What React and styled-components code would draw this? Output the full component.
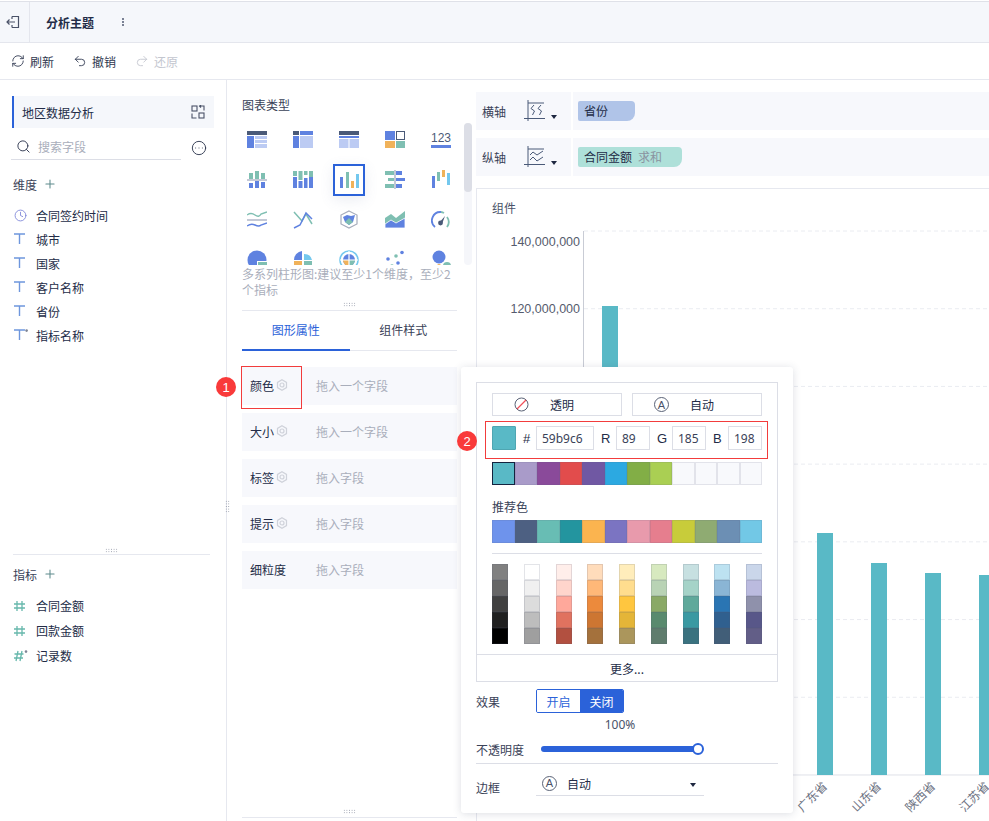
import React from 'react';
import styled, { createGlobalStyle } from 'styled-components';
import { RefreshCw, Undo2, Redo2, Search, CircleEllipsis, Clock, Plus } from 'lucide-react';

const BLUE = '#2b62d9';
const TEXT = '#232c47';
const MUTED = '#a9aebb';
const LINE = '#e6e8ef';
const PANEL = '#f7f8fc';

const Global = createGlobalStyle`
	* { box-sizing: border-box; }
	html, body { margin: 0; padding: 0; background: #fff; }
	body {
		font-family: "Noto Sans CJK SC", "Noto Sans", sans-serif;
		font-size: 12px;
		color: ${TEXT};
	}
`;

const Page = styled.div`
	position: relative;
	width: 989px;
	height: 821px;
	overflow: hidden;
	background: #fff;
`;

const Header = styled.header`
	margin-top: 1px;
	height: 42px;
	display: flex;
	align-items: center;
	background: #f5f7fb;
	border-top: 1px solid #dfe1e8;
	border-bottom: 1px solid #e4e6ed;
`;

const BackCell = styled.div`
	width: 30px;
	height: 100%;
	display: flex;
	align-items: center;
	justify-content: center;
	padding-right: 4px;
	border-right: 1px solid #e4e6ed;
`;

const HeaderTitle = styled.div`
	margin-left: 16px;
	font-weight: 700;
	width: 76px;
`;

const Dots = styled.div`
	width: 2px;
	height: 2px;
	background: #7a8194;
	box-shadow: 0 -3px 0 #7a8194, 0 3px 0 #7a8194;
`;

const Toolbar = styled.div`
	height: 37px;
	display: flex;
	align-items: center;
	gap: 19px;
	padding-left: 11px;
	border-bottom: 1px solid ${LINE};
`;

const ToolButton = styled.div`
	display: flex;
	align-items: center;
	gap: 5px;
	color: ${p => (p.$disabled ? '#c3c6cf' : '#2f3850')};
`;

const Body = styled.div`
	height: 741px;
	display: flex;
`;

const LeftPanel = styled.aside`
	position: relative;
	width: 227px;
	flex: none;
	border-right: 1px solid ${LINE};
`;

const LeftTop = styled.div`
	height: 466px;
	padding: 16px 12px 0 12px;
`;

const SourceBar = styled.div`
	height: 32px;
	width: 202px;
	display: flex;
	align-items: center;
	justify-content: space-between;
	padding: 0 9px 0 8px;
	background: #f5f7fb;
	border-left: 2px solid ${BLUE};
`;

const SearchRow = styled.div`
	margin-top: 8px;
	display: flex;
	align-items: center;
	justify-content: space-between;
	width: 195px;
`;

const SearchBox = styled.div`
	margin-left: -1px;
	width: 170px;
	height: 24px;
	display: flex;
	align-items: center;
	gap: 7px;
	padding: 0 0 2px 5px;
	border-bottom: 1px solid #dcdee6;
	color: ${MUTED};
`;

const GroupHead = styled.div`
	display: flex;
	align-items: center;
	gap: 6px;
	height: 20px;
	padding-left: 1px;
	margin-top: ${p => p.$top}px;
	color: #3a4258;
`;

const FieldList = styled.div`
	margin-top: 9px;
`;

const Field = styled.div`
	height: ${p => p.$pitch}px;
	display: flex;
	align-items: center;
	gap: 8px;
`;

const FieldIcon = styled.span`
	width: 16px;
	display: flex;
	justify-content: center;
`;

const HGrip = styled.div`
	width: 13px;
	height: 5px;
	margin: 0 auto;
	background-image: radial-gradient(#8b90a0 0.7px, transparent 0.8px);
	background-size: 2.6px 2.5px;
`;

const GripZone = styled.div`
	height: 8px;
	margin-top: ${p => p.$top || 0}px;
	display: flex;
	align-items: center;
	justify-content: center;
`;

const LeftBottom = styled.div`
	padding: 0 16px 0 12px;
`;

const RuleBelow = styled.div`
	border-bottom: 1px solid ${LINE};
	margin-left: ${p => p.$inset || 0}px;
	padding-bottom: ${p => p.$gap || 0}px;
`;

const VGrip = styled.div`
	position: absolute;
	right: -4px;
	top: 420px;
	width: 5px;
	height: 13px;
	background-image: radial-gradient(#8b90a0 0.7px, transparent 0.8px);
	background-size: 2.5px 2.6px;
`;

const MidPanel = styled.section`
	width: 249px;
	flex: none;
	display: flex;
	flex-direction: column;
	padding: 15px 19px 3px 15px;
`;

const MidTitle = styled.div`
	height: 20px;
	line-height: 20px;
	color: #3a4258;
`;

const ChartPicker = styled.div`
	margin: 5px -19px 0 -8px;
	height: 145px;
	display: flex;
`;

const ChartGrid = styled.div`
	width: 230px;
	height: 145px;
	overflow: hidden;
	display: grid;
	grid-template-columns: repeat(5, 46px);
	grid-auto-rows: 40px;
`;

const ChartCell = styled.div`
	display: flex;
	align-items: center;
	justify-content: center;
`;

const SelectedBox = styled.div`
	width: 32px;
	height: 32px;
	display: flex;
	align-items: center;
	justify-content: center;
	border: 2px solid ${BLUE};
	box-shadow: 0 4px 14px rgba(90, 110, 160, 0.12);
`;

const ScrollTrack = styled.div`
	margin-top: 3px;
	width: 8px;
	height: 142px;
	border-radius: 4px;
	background: #f5f6fa;
`;

const ScrollThumb = styled.div`
	width: 8px;
	height: 69px;
	border-radius: 4px;
	background: #dcdee6;
`;

const Hint = styled.div`
	margin-top: 1px;
	width: 218px;
	line-height: 16px;
	color: ${MUTED};
`;

const Tabs = styled.div`
	display: flex;
	height: 41px;
	border-top: 1px solid ${LINE};
	border-bottom: 1px solid ${LINE};
	margin-top: 2px;
`;

const Tab = styled.div`
	width: 108px;
	height: 40px;
	display: flex;
	align-items: center;
	justify-content: center;
	padding-bottom: 2px;
	color: ${p => (p.$active ? BLUE : '#3a4258')};
	border-bottom: 2px solid ${p => (p.$active ? BLUE : 'transparent')};
`;

const DropList = styled.div`
	margin-top: 16px;
	display: flex;
	flex-direction: column;
	gap: 8px;
`;

const DropRow = styled.div`
	height: 38px;
	display: flex;
	align-items: center;
	padding: 0 0 2px 8px;
	background: ${PANEL};
`;

const DropLabel = styled.div`
	width: 66px;
	display: flex;
	align-items: center;
	gap: 2px;
`;

const Placeholder = styled.span`
	color: ${MUTED};
`;

const MidFoot = styled.div`
	margin-top: auto;
`;

const RightPanel = styled.section`
	flex: 1;
	min-width: 0;
	padding-top: 12px;
`;

const AxisRow = styled.div`
	height: 38px;
	margin-bottom: 8px;
	display: flex;
	gap: 2px;
`;

const AxisLabel = styled.div`
	width: 95px;
	display: flex;
	align-items: center;
	padding-left: 6px;
	background: ${PANEL};
	span { width: 42px; color: #3a4258; }
`;

const AxisValue = styled.div`
	flex: 1;
	display: flex;
	align-items: center;
	padding-left: 5px;
	background: ${PANEL};
`;

const Pill = styled.div`
	height: 20px;
	width: ${p => p.$width}px;
	display: flex;
	align-items: center;
	gap: 6px;
	padding: 0 0 2px 6px;
	background: ${p => p.$color};
	border-radius: 2px 4px 8px 2px;
	em { font-style: normal; color: #8a93a0; }
`;

const Caret = styled.i`
	display: inline-block;
	width: 0;
	height: 0;
	margin: ${p => p.$margin};
	border-left: 3.5px solid transparent;
	border-right: 3.5px solid transparent;
	border-top: 4px solid #1e2740;
`;

const ChartCard = styled.div`
	margin-top: 12px;
	height: 640px;
	border-top: 1px solid ${LINE};
	border-left: 1px solid ${LINE};
	padding-top: 9px;
`;

const ChartTitle = styled.div`
	height: 20px;
	line-height: 20px;
	padding-left: 15px;
	color: #4a5268;
`;

const ChartSvg = styled.svg`
	display: block;
	margin-top: 4px;
	text {
		font-family: "Noto Sans CJK SC", sans-serif;
		font-size: 12px;
		fill: #6d7282;
	}
	text.num {
		font-family: "Liberation Sans", sans-serif;
		font-size: 12.5px;
		fill: #555b6d;
	}
`;

const Popover = styled.div`
	position: absolute;
	left: 461px;
	top: 367px;
	width: 332px;
	height: 446px;
	padding: 15px 15px 0;
	background: #fff;
	border-radius: 3px;
	box-shadow: 0 1px 8px rgba(60, 70, 100, 0.18);
`;

const PickerBox = styled.div`
	width: 302px;
	height: 300px;
	border: 1px solid #dcdee6;
	padding: 10px 15px 0;
`;

const ModeRow = styled.div`
	display: flex;
	gap: 10px;
`;

const ModeButton = styled.div`
	width: 130px;
	height: 23px;
	display: flex;
	align-items: center;
	padding-left: 21px;
	border: 1px solid #dcdee6;
	span { margin-left: 21px; }
`;

const LetterBadge = styled.div`
	width: 15px;
	height: 15px;
	flex: none;
	display: flex;
	align-items: center;
	justify-content: center;
	border: 1px solid #5a6276;
	border-radius: 50%;
	font-family: "Liberation Sans", sans-serif;
	font-size: 11px;
	color: #4a5268;
`;

const ValueRow = styled.div`
	margin-top: 10px;
	height: 24px;
	display: flex;
	align-items: center;
`;

const ValueSwatch = styled.div`
	width: 24px;
	height: 24px;
	margin-right: 7px;
	background: #59b9c6;
	border: 1px solid #4fa6b2;
	border-radius: 1px;
`;

const ValueKey = styled.span`
	width: ${p => p.$width}px;
	font-family: "Liberation Sans", sans-serif;
	font-size: 13px;
`;

const ValueInput = styled.div`
	width: ${p => p.$width}px;
	height: 24px;
	margin-right: ${p => p.$gap || 0}px;
	display: flex;
	align-items: center;
	padding-left: 5px;
	border: 1px solid #dcdee6;
	font-family: "Noto Sans", sans-serif;
	font-size: 12px;
	color: #3a4258;
`;

const SwatchRow = styled.div`
	margin-top: ${p => p.$top}px;
	display: grid;
	grid-template-columns: repeat(12, 1fr);
	height: 23px;
`;

const Swatch = styled.div`
	background: ${p => p.$color};
	border: 1px solid ${p => (p.$selected ? '#14233f' : 'rgba(90, 100, 130, 0.14)')};
`;

const SectionLabel = styled.div`
	margin-top: 12px;
	height: 20px;
	line-height: 20px;
	color: #3a4258;
`;

const ThinRule = styled.div`
	margin-top: 10px;
	height: 1px;
	background: #dcdee6;
`;

const ShadeGrid = styled.div`
	margin-top: 10px;
	display: flex;
	justify-content: space-between;
`;

const ShadeColumn = styled.div`
	width: 16px;
	display: flex;
	flex-direction: column;
`;

const Shade = styled.div`
	height: 16px;
	background: ${p => p.$color};
	border: 1px solid rgba(80, 90, 110, 0.16);
`;

const MoreRow = styled.div`
	margin: 10px -15px 0;
	height: 27px;
	display: flex;
	align-items: center;
	justify-content: center;
	border-top: 1px solid #dcdee6;
`;

const OptionRow = styled.div`
	display: flex;
	align-items: center;
	height: 24px;
	margin-top: ${p => p.$top}px;
`;

const OptionKey = styled.div`
	width: 60px;
	color: #3a4258;
`;

const Toggle = styled.div`
	width: 88px;
	height: 24px;
	display: flex;
	border: 1px solid ${BLUE};
	border-radius: 2px;
	overflow: hidden;
`;

const ToggleItem = styled.div`
	flex: 1;
	display: flex;
	align-items: center;
	justify-content: center;
	color: ${p => (p.$on ? '#fff' : BLUE)};
	background: ${p => (p.$on ? BLUE : '#fff')};
`;

const Percent = styled.div`
	margin-top: 4px;
	width: 288px;
	text-align: center;
	line-height: 16px;
	font-family: "Noto Sans", sans-serif;
	color: #4a5268;
`;

const SliderTrack = styled.div`
	position: relative;
	margin-left: 5px;
	width: 157px;
	height: 6px;
	border-radius: 3px;
	background: ${BLUE};
`;

const SliderKnob = styled.div`
	position: absolute;
	right: -6px;
	top: -3px;
	width: 12px;
	height: 12px;
	border-radius: 50%;
	background: #fff;
	border: 2px solid ${BLUE};
`;

const OptionRule = styled.div`
	margin-top: 2px;
	height: 1px;
	width: 302px;
	background: #dcdee6;
`;

const SelectBox = styled.div`
	width: 168px;
	height: 24px;
	align-self: flex-start;
	margin-top: -3px;
	display: flex;
	align-items: center;
	gap: 10px;
	padding: 0 8px 1px 6px;
	border-bottom: 1px solid #dcdee6;
`;

const RedFrame = styled.div`
	position: absolute;
	left: ${p => p.$x}px;
	top: ${p => p.$y}px;
	width: ${p => p.$w}px;
	height: ${p => p.$h}px;
	border: 1px solid #f23c3c;
`;

const Marker = styled.div`
	position: absolute;
	left: ${p => p.$x}px;
	top: ${p => p.$y}px;
	width: 20px;
	height: 20px;
	display: flex;
	align-items: center;
	justify-content: center;
	border-radius: 50%;
	background: #f93a3a;
	color: #fff;
	font-family: "Liberation Sans", sans-serif;
	font-size: 13px;
`;

const B = '#5f82e0';
const L = '#bccbf3';
const D = '#4a5a78';
const T = '#7fbfb2';
const O = '#f0b25a';
const S = '#74c8ee';
const G = '#c4c9d6';

const boxes = list =>
	list.map(([x, y, w, h, fill], i) => <rect key={i} x={x} y={y} width={w} height={h} fill={fill} />);

const Glyph = ({ children }) =>
	<svg width="20" height="20" viewBox="0 0 20 20">
		{children}
	</svg>;

const chartIcons = [
	boxes([[0, 1, 20, 4, D], [0, 6, 7, 12, B], [8, 6, 12, 3, L], [8, 10, 12, 3, L], [8, 14, 12, 4, L]]),
	boxes([[0, 1, 6, 4, D], [7, 1, 13, 4, B], [0, 6, 6, 12, B], [7, 6, 13, 12, L]]),
	boxes([[0, 1, 20, 4, D], [0, 6, 20, 2, B], [0, 9, 9.5, 9, L], [10.5, 9, 9.5, 9, L]]),
	<>
		{boxes([[0, 1, 10, 9, B], [0, 11, 10, 7, O], [11, 11, 9, 7, T]])}
		<rect x="11.5" y="1.5" width="8" height="8" fill="#fff" stroke={D} />
	</>,
	<>
		<text x="10" y="12" textAnchor="middle" fontFamily="Liberation Sans" fontSize="12" fill={D}>123</text>
		<rect x="0" y="15" width="20" height="3" fill={B} />
	</>,
	boxes([[2, 3, 4, 6, T], [8, 1, 4, 8, T], [14, 3, 4, 6, T], [0, 9, 20, 2, G], [2, 13, 4, 5, B], [8, 11, 4, 7, B], [14, 12, 4, 6, B]]),
	boxes([[0, 1, 4, 5, T], [0, 7, 4, 11, B], [5.5, 1, 4, 9, T], [5.5, 11, 4, 7, B], [11, 1, 3.5, 4, T], [11, 8, 3.5, 10, B], [16, 1, 4, 6, T], [16, 7, 4, 11, B]]),
	boxes([[1, 7, 3, 11, B], [7, 2, 3, 16, T], [12, 11, 3, 7, O], [17, 4, 3, 14, S]]),
	boxes([[0, 1, 10, 4, T], [3, 8, 7, 3, T], [0, 14, 10, 4, T], [9, 0, 2, 19, G], [11, 1, 6, 4, B], [11, 8, 9, 3, B], [11, 14, 6, 4, B]]),
	boxes([[1, 6, 3, 12, B], [6, 2, 3, 9, T], [11, 0, 3, 7, O], [16, 3, 3, 12, S]]),
	<>
		<path d="M0 5 Q4 2 8 5 T14 4 L20 2" fill="none" stroke={T} strokeWidth="1.4" />
		<rect x="0" y="9" width="20" height="2" fill={G} />
		<path d="M0 16 Q4 13 8 15 T14 15 L20 13" fill="none" stroke={B} strokeWidth="1.4" />
	</>,
	<>
		<path d="M1 2 L9 11 L13 4 L19 14" fill="none" stroke={T} strokeWidth="1.5" />
		<path d="M1 18 L7 15 L13 3 L19 9" fill="none" stroke={B} strokeWidth="1.5" />
	</>,
	<>
		<path d="M10 1 L18 5 V14 L10 18 L2 14 V5 Z" fill="none" stroke="#a6acbb" strokeWidth="1.2" />
		<path d="M4 7 L8 5 L12 6 L16 5 L14 12 L10 15 L6 12 Z" fill={B} />
		<path d="M6 12 L10 8 L14 12 L10 15 Z" fill={T} />
	</>,
	<>
		<path d="M0 8 L6 4 L11 8 L20 1 V18 H0 Z" fill={T} />
		<path d="M0 14 L6 10 L11 13 L20 8 V18 H0 Z" fill={B} stroke="#fff" strokeWidth="0.8" />
	</>,
	<>
		<path d="M4 17 A8.5 8.5 0 0 1 10 2" fill="none" stroke={B} strokeWidth="1.8" />
		<path d="M10 2 A8.5 8.5 0 0 1 13 3" fill="none" stroke={T} strokeWidth="1.8" />
		<path d="M16 7 A8.5 8.5 0 0 1 16 17" fill="none" stroke={T} strokeWidth="1.8" />
		<path d="M8 13 L14 6 L11 14 Z" fill={D} />
		<circle cx="9.5" cy="13" r="2.4" fill={D} />
	</>,
	<>
		<circle cx="10" cy="10" r="9.5" fill={B} />
		<rect x="10" y="11" width="10" height="9" fill="#fff" />
		<rect x="11" y="12" width="9" height="6" fill={T} />
	</>,
	<>
		<path d="M9 1 A9 9 0 0 0 1 10 H9 Z" fill={B} />
		<path d="M11 4 A8 8 0 0 1 19 10 H11 Z" fill={S} />
		<rect x="1" y="11" width="8" height="7" fill={O} />
		<rect x="11" y="11" width="8" height="7" fill={T} />
	</>,
	<>
		<circle cx="10" cy="10" r="9" fill="none" stroke={S} strokeWidth="1.6" />
		<circle cx="10" cy="10" r="6" fill={B} />
		<path d="M4 10 A6 6 0 0 0 10 16 V10 Z" fill={O} />
		<path d="M16 10 A6 6 0 0 1 10 16 V10 Z" fill={T} />
		<path d="M10 1 V19 M1 10 H19" stroke="#fff" strokeWidth="1.2" />
	</>,
	<>
		<circle cx="3" cy="9" r="1.8" fill={B} />
		<circle cx="11" cy="6" r="1.8" fill={T} />
		<circle cx="17" cy="2.5" r="1.8" fill={B} />
		<circle cx="7" cy="16" r="1.8" fill={T} />
		<circle cx="13" cy="13" r="1.8" fill={B} />
	</>,
	<>
		<circle cx="8" cy="7" r="6.5" fill={B} />
		<circle cx="16" cy="16" r="4" fill={T} />
		<circle cx="8" cy="16" r="2" fill={O} />
	</>,
];

const ExitIcon = () =>
	<svg width="14" height="14" viewBox="0 0 14 14" fill="none" stroke="#4a5268" strokeWidth="1.2">
		<path d="M6 1.5 H12.5 V12.5 H6 M6 1.5 V4 M6 12.5 V10 M9 7 H1 M3.5 4.5 L1 7 L3.5 9.5" />
	</svg>;

const SwapIcon = () =>
	<svg width="14" height="14" viewBox="0 0 14 14" fill="none" stroke="#4a5268" strokeWidth="1.1">
		<rect x="1" y="1" width="5" height="5" />
		<rect x="8" y="8" width="5" height="5" />
		<path d="M1 8.5 V13 H5.5 M8.5 1 H13 V5.5 M10 0 L8.5 1 L10 2.5 M3.5 13 L5.5 13" />
	</svg>;

const TypeIcon = ({ star }) =>
	<svg width="16" height="12" viewBox="0 0 16 12" fill="none" stroke="#6e96dd" strokeWidth="1.4">
		<path d="M2 1 H13 M7.5 1 V11" />
		{star && <circle cx="14.6" cy="1.6" r="1.3" fill="#7f8596" stroke="none" />}
	</svg>;

const HashIcon = ({ star }) =>
	<svg width="16" height="12" viewBox="0 0 16 12" fill="none" stroke="#67b8ac" strokeWidth="1.3">
		{star
			? <path d="M6 1 L4 11 M10 1 L8 11 M2.5 4 H11.5 M2 8 H11" />
			: <path d="M5 1 V11 M10 1 V11 M2 4 H13 M2 8 H13" />}
		{star && <circle cx="14" cy="1.6" r="1.3" fill="#7f8596" stroke="none" />}
	</svg>;

const GearIcon = () =>
	<svg width="12" height="12" viewBox="0 0 12 12" fill="none" stroke="#cfd2da" strokeWidth="1.2">
		<path d="M6 0.8 L10.5 3.4 V8.6 L6 11.2 L1.5 8.6 V3.4 Z" />
		<circle cx="6" cy="6" r="2" />
	</svg>;

const BanIcon = () =>
	<svg width="15" height="15" viewBox="0 0 15 15" fill="none">
		<circle cx="7.5" cy="7.5" r="6.5" stroke="#5a6276" />
		<path d="M3 12 L12 3" stroke="#f0505a" strokeWidth="1.2" />
	</svg>;

const AxisGlyph = ({ wave }) =>
	<svg width="21" height="22" viewBox="0 0 21 22" fill="none" stroke="#4a5a78" strokeWidth="1">
		<path d="M4 0 V21 M0 18.5 H21 M4 3 H20" />
		{wave
			? <>
					<path d="M6 9 L9 6 L13 9 L19 5" />
					<path d="M6 14 L9 11 L13 15 L19 11" />
				</>
			: <path d="M10 5 L7 8.5 L10.5 11 L8.5 15 M17 5 L14 8.5 L17.5 11 L15.5 15" />}
	</svg>;

const dims = [
	{ name: '合同签约时间', icon: <Clock size={13} color="#7c84d8" strokeWidth={1.6} /> },
	{ name: '城市', icon: <TypeIcon /> },
	{ name: '国家', icon: <TypeIcon /> },
	{ name: '客户名称', icon: <TypeIcon /> },
	{ name: '省份', icon: <TypeIcon /> },
	{ name: '指标名称', icon: <TypeIcon star /> },
];

const measures = [
	{ name: '合同金额', icon: <HashIcon /> },
	{ name: '回款金额', icon: <HashIcon /> },
	{ name: '记录数', icon: <HashIcon star /> },
];

const drops = [
	{ label: '颜色', gear: true, hint: '拖入一个字段' },
	{ label: '大小', gear: true, hint: '拖入一个字段' },
	{ label: '标签', gear: true, hint: '拖入字段' },
	{ label: '提示', gear: true, hint: '拖入字段' },
	{ label: '细粒度', hint: '拖入字段' },
];

const recent = ['#59b9c6', '#a99bc9', '#8a4a9a', '#e24c4c', '#7058a3', '#2ca9e1', '#82ae46', '#aacf53', '#f8f9fc', '#f8f9fc', '#f8f9fc', '#f8f9fc'];
const suggested = ['#6e93ec', '#4d6082', '#68bdb4', '#23959f', '#fbb44f', '#7b74c2', '#e89aac', '#e67e8e', '#c8cc3a', '#8fab72', '#6c8fb4', '#72c8e6'];
const shades = [
	['#808080', '#666666', '#404040', '#202020', '#000000'],
	['#ffffff', '#f0f0f0', '#dcdcdc', '#bdbdbd', '#9f9f9f'],
	['#ffeeea', '#ffd5cc', '#ffa89b', '#e0725f', '#b25040'],
	['#ffdcbb', '#ffb878', '#ec8a3c', '#cd7632', '#a4713c'],
	['#ffedbb', '#ffdd8e', '#ffc63f', '#e4b538', '#ab965c'],
	['#d7e9bf', '#b9d3b5', '#8aa966', '#598a6e', '#5f7c6d'],
	['#c7e0e1', '#a5d3c8', '#5fa99b', '#3a99a2', '#3a727f'],
	['#bde2f1', '#8ab5d5', '#2a75b3', '#30608f', '#415e78'],
	['#cad6ea', '#bbbbdf', '#8f91ab', '#585789', '#625e87'],
];

// chart drawn in page coordinates, the viewBox maps them onto the svg
const ticks = [140, 120, 100, 80, 60, 40, 20, 0];
const tickY = i => 231 + i * 77.71;
const bars = [
	{ x: 602, top: 306 },
	{ x: 656, top: 420 },
	{ x: 710, top: 470 },
	{ x: 763.5, top: 500 },
	{ x: 817, top: 533, name: '广东省' },
	{ x: 871, top: 563, name: '山东省' },
	{ x: 925, top: 573, name: '陕西省' },
	{ x: 979, top: 575, name: '江苏省' },
];

const Chart = () =>
	<ChartSvg width="512" height="606" viewBox="477 222 512 606">
		{ticks.map((t, i) =>
			<g key={t}>
				<line x1="584" x2="989" y1={tickY(i)} y2={tickY(i)} stroke={t === 0 ? '#dfe1e8' : '#eaecf1'} strokeDasharray={t === 0 ? undefined : '4 3'} />
				{i < 2 &&
					<text className="num" x="580" y={tickY(i) + 15 - i * 11} textAnchor="end">
						{t},000,000
					</text>}
			</g>,
		)}
		<line x1="583.5" x2="583.5" y1="231" y2="775" stroke="#c9ccd5" />
		{bars.map(b =>
			<g key={b.x}>
				<rect x={b.x} y={b.top} width="16" height={775 - b.top} fill="#59b9c6" />
				{b.name &&
					<text x={b.x + 11} y="787" textAnchor="end" transform={`rotate(-45 ${b.x + 11} 787)`}>
						{b.name}
					</text>}
			</g>,
		)}
	</ChartSvg>;

const App = () =>
	<Page>
		<Global />
		<Header>
			<BackCell>
				<ExitIcon />
			</BackCell>
			<HeaderTitle>分析主题</HeaderTitle>
			<Dots />
		</Header>
		<Toolbar>
			<ToolButton>
				<RefreshCw size={14} strokeWidth={1.5} />刷新
			</ToolButton>
			<ToolButton>
				<Undo2 size={14} strokeWidth={1.5} />撤销
			</ToolButton>
			<ToolButton $disabled>
				<Redo2 size={14} strokeWidth={1.5} />还原
			</ToolButton>
		</Toolbar>
		<Body>
			<LeftPanel>
				<VGrip />
				<LeftTop>
					<SourceBar>
						地区数据分析
						<SwapIcon />
					</SourceBar>
					<SearchRow>
						<SearchBox>
							<Search size={15} color="#2f3850" strokeWidth={1.5} />
							搜索字段
						</SearchBox>
						<CircleEllipsis size={16} color="#2f3850" strokeWidth={1.4} />
					</SearchRow>
					<GroupHead $top={14}>
						维度
						<Plus size={14} color="#5d8a8c" strokeWidth={1.8} />
					</GroupHead>
					<FieldList>
						{dims.map(d =>
							<Field key={d.name} $pitch={24}>
								<FieldIcon>{d.icon}</FieldIcon>
								{d.name}
							</Field>,
						)}
					</FieldList>
				</LeftTop>
				<LeftBottom>
					<RuleBelow $inset={1}>
						<GripZone>
							<HGrip />
						</GripZone>
					</RuleBelow>
					<GroupHead $top={9}>
						指标
						<Plus size={14} color="#5d8a8c" strokeWidth={1.8} />
					</GroupHead>
					<FieldList>
						{measures.map(d =>
							<Field key={d.name} $pitch={25}>
								<FieldIcon>{d.icon}</FieldIcon>
								{d.name}
							</Field>,
						)}
					</FieldList>
				</LeftBottom>
			</LeftPanel>
			<MidPanel>
				<MidTitle>图表类型</MidTitle>
				<ChartPicker>
					<ChartGrid>
						{chartIcons.map((icon, i) =>
							<ChartCell key={i}>
								{i === 7
									? <SelectedBox>
											<Glyph>{icon}</Glyph>
										</SelectedBox>
									: <Glyph>{icon}</Glyph>}
							</ChartCell>,
						)}
					</ChartGrid>
					<ScrollTrack>
						<ScrollThumb />
					</ScrollTrack>
				</ChartPicker>
				<Hint>多系列柱形图:建议至少1个维度，至少2个指标</Hint>
				<GripZone $top={2}>
					<HGrip />
				</GripZone>
				<Tabs>
					<Tab $active>图形属性</Tab>
					<Tab>组件样式</Tab>
				</Tabs>
				<DropList>
					{drops.map(d =>
						<DropRow key={d.label}>
							<DropLabel>
								{d.label}
								{d.gear && <GearIcon />}
							</DropLabel>
							<Placeholder>{d.hint}</Placeholder>
						</DropRow>,
					)}
				</DropList>
				<MidFoot>
					<RuleBelow $gap={2}>
						<GripZone>
							<HGrip />
						</GripZone>
					</RuleBelow>
				</MidFoot>
			</MidPanel>
			<RightPanel>
				<AxisRow>
					<AxisLabel>
						<span>横轴</span>
						<AxisGlyph />
						<Caret $margin="11px 0 0 6px" />
					</AxisLabel>
					<AxisValue>
						<Pill $width={57} $color="#b0c4e8">省份</Pill>
					</AxisValue>
				</AxisRow>
				<AxisRow>
					<AxisLabel>
						<span>纵轴</span>
						<AxisGlyph wave />
						<Caret $margin="11px 0 0 6px" />
					</AxisLabel>
					<AxisValue>
						<Pill $width={104} $color="#aee0d9">
							合同金额<em>求和</em>
						</Pill>
					</AxisValue>
				</AxisRow>
				<ChartCard>
					<ChartTitle>组件</ChartTitle>
					<Chart />
				</ChartCard>
			</RightPanel>
		</Body>
		<Popover>
			<PickerBox>
				<ModeRow>
					<ModeButton>
						<BanIcon />
						<span>透明</span>
					</ModeButton>
					<ModeButton>
						<LetterBadge>A</LetterBadge>
						<span>自动</span>
					</ModeButton>
				</ModeRow>
				<ValueRow>
					<ValueSwatch />
					<ValueKey $width={13}>#</ValueKey>
					<ValueInput $width={58} $gap={7}>59b9c6</ValueInput>
					<ValueKey $width={15}>R</ValueKey>
					<ValueInput $width={34} $gap={7}>89</ValueInput>
					<ValueKey $width={15}>G</ValueKey>
					<ValueInput $width={34} $gap={7}>185</ValueInput>
					<ValueKey $width={15}>B</ValueKey>
					<ValueInput $width={34}>198</ValueInput>
				</ValueRow>
				<SwatchRow $top={12}>
					{recent.map((c, i) => <Swatch key={i} $color={c} $selected={i === 0} />)}
				</SwatchRow>
				<SectionLabel>推荐色</SectionLabel>
				<SwatchRow $top={3}>
					{suggested.map(c => <Swatch key={c} $color={c} />)}
				</SwatchRow>
				<ThinRule />
				<ShadeGrid>
					{shades.map((col, i) =>
						<ShadeColumn key={i}>
							{col.map(c => <Shade key={c} $color={c} />)}
						</ShadeColumn>,
					)}
				</ShadeGrid>
				<MoreRow>更多...</MoreRow>
			</PickerBox>
			<OptionRow $top={7}>
				<OptionKey>效果</OptionKey>
				<Toggle>
					<ToggleItem>开启</ToggleItem>
					<ToggleItem $on>关闭</ToggleItem>
				</Toggle>
			</OptionRow>
			<Percent>100%</Percent>
			<OptionRow $top={4}>
				<OptionKey>不透明度</OptionKey>
				<SliderTrack>
					<SliderKnob />
				</SliderTrack>
			</OptionRow>
			<OptionRule />
			<OptionRow $top={11}>
				<OptionKey>边框</OptionKey>
				<SelectBox>
					<LetterBadge>A</LetterBadge>
					<span>自动</span>
					<Caret $margin="3px 0 0 auto" />
				</SelectBox>
			</OptionRow>
		</Popover>
		<RedFrame $x={241} $y={366} $w={61} $h={43} />
		<RedFrame $x={485} $y={421} $w={283} $h={38} />
		<Marker $x={216} $y={377}>1</Marker>
		<Marker $x={457} $y={431}>2</Marker>
	</Page>;

export default App;
